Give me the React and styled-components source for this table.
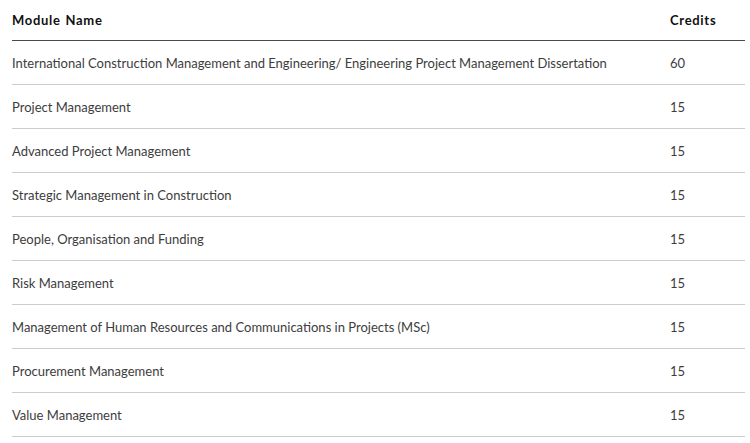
import React from "react";
import styled, { createGlobalStyle } from "styled-components";

const Global = createGlobalStyle`
  html, body { margin: 0; padding: 0; background: #fff; }
  body { font-family: Lato, "Open Sans", sans-serif; }
`;

const Table = styled.div`
  margin-left: 12px;
  width: 733px;
  display: flex;
  flex-direction: column;
`;

const Row = styled.div`
  display: grid;
  grid-template-columns: 658px 1fr;
  align-items: center;
  height: ${(p) => (p.$head ? "40px" : "43px")};
  border-bottom: 1px solid ${(p) => (p.$head ? "#4a4a4a" : "#cccccc")};
`;

const Cell = styled.div`
  font-size: 13px;
  color: ${(p) => (p.$head ? "#111" : "#3d3d3d")};
  font-weight: ${(p) => (p.$head ? 700 : 400)};
  letter-spacing: ${(p) => (p.$head ? "0.7px" : "0")};
  word-spacing: ${(p) => (p.$head ? "1px" : "0")};
  white-space: nowrap;
`;

const rows = [
  ["International Construction Management and Engineering/ Engineering Project Management Dissertation", "60"],
  ["Project Management", "15"],
  ["Advanced Project Management", "15"],
  ["Strategic Management in Construction", "15"],
  ["People, Organisation and Funding", "15"],
  ["Risk Management", "15"],
  ["Management of Human Resources and Communications in Projects (MSc)", "15"],
  ["Procurement Management", "15"],
  ["Value Management", "15"],
];

export default function App() {
  return (
    <>
      <Global />
      <Table>
        <Row $head>
          <Cell $head>Module Name</Cell>
          <Cell $head>Credits</Cell>
        </Row>
        {rows.map(([name, credits]) => (
          <Row key={name}>
            <Cell>{name}</Cell>
            <Cell>{credits}</Cell>
          </Row>
        ))}
      </Table>
    </>
  );
}
